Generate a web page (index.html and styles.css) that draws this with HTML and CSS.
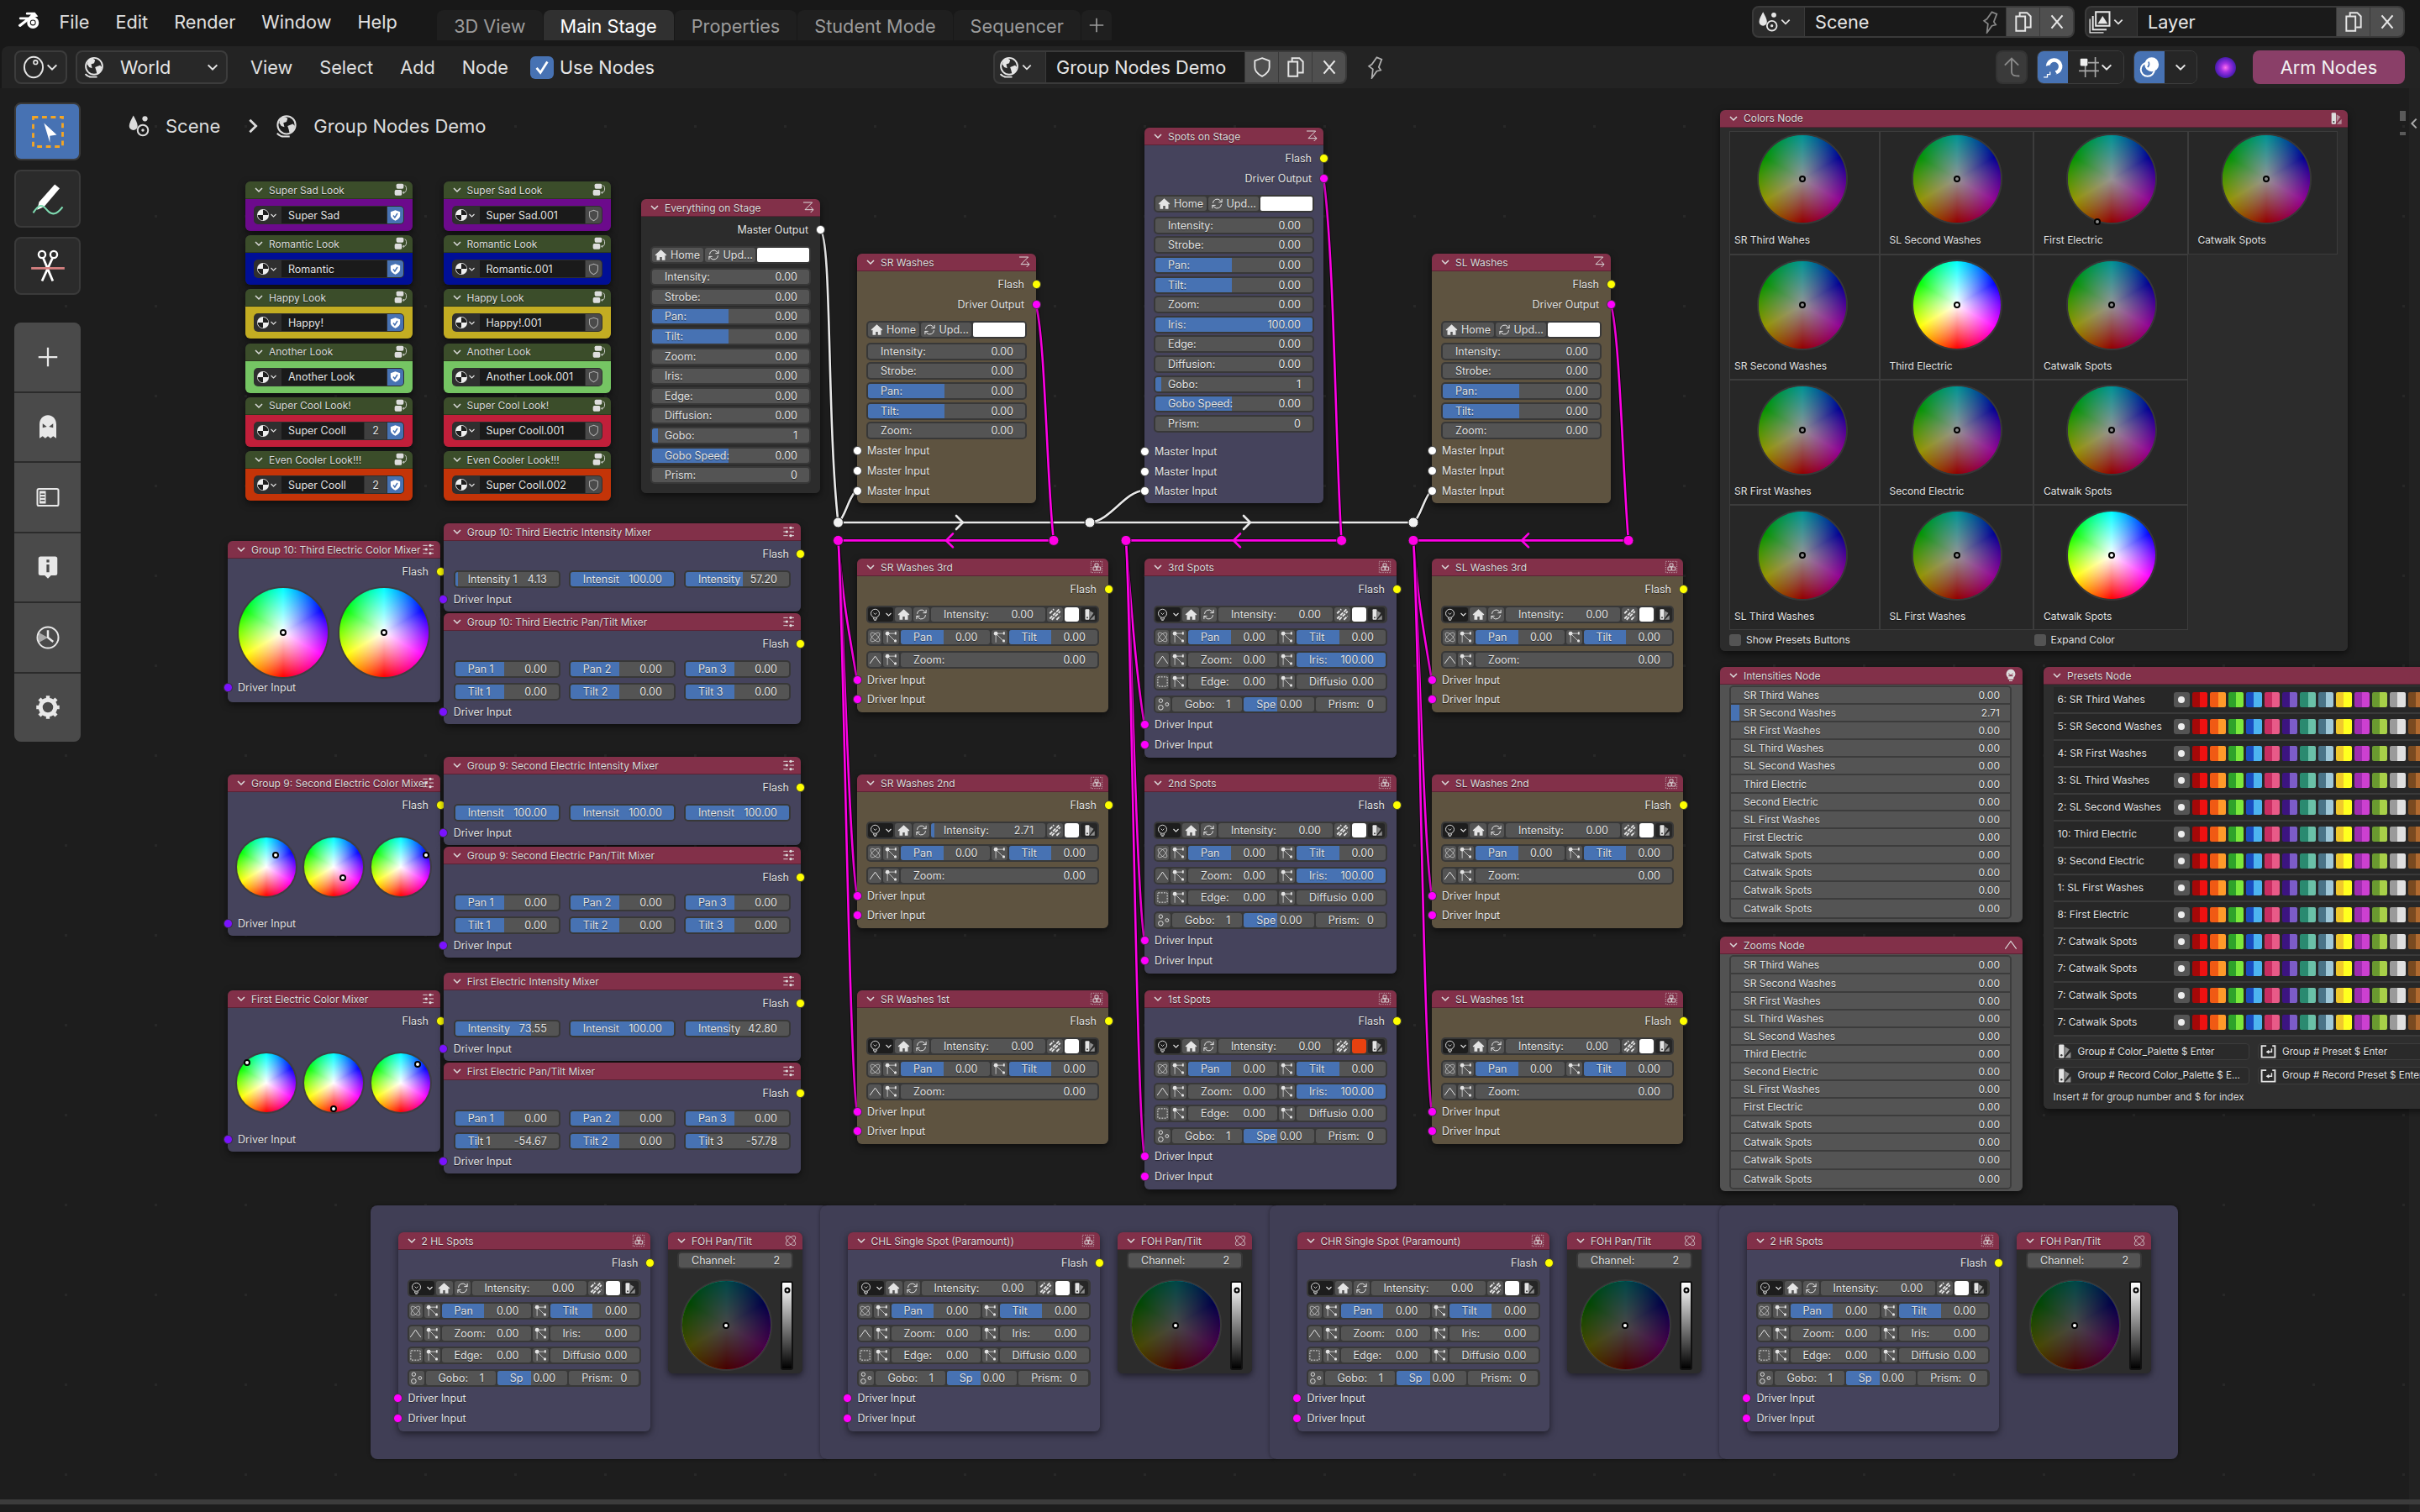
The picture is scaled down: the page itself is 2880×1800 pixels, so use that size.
FILE: index.html
```html
<!DOCTYPE html>
<html lang="en">
<head>
<meta charset="utf-8">
<title>Blender - Main Stage</title>
<link rel="stylesheet" href="styles.css">
</head>
<body>
<svg class="sprite" aria-hidden="true">
  <symbol id="i-logo" viewBox="0 0 32 32"><path fill="#fff" d="M13 17a7.5 7.5 0 1 1 15 0a7.5 7.5 0 1 1-15 0zm3.8 0a3.7 3.7 0 1 0 7.4 0a3.7 3.7 0 1 0-7.4 0z"/><path fill="#fff" d="M2 20l9-7H4.5a1.5 1.5 0 0 1 0-3H15l3-3h-5a1.5 1.5 0 0 1 0-3h10l4 5-9 3-13 10a2 2 0 0 1-3-2z"/><circle cx="20.5" cy="17" r="2.6" fill="#fff"/></symbol>
  <symbol id="i-globe" viewBox="0 0 24 24"><circle cx="12" cy="11" r="8.5" fill="none" stroke="currentColor" stroke-width="1.6"/><path fill="currentColor" d="M6 5c3-2 6-2 7 0l-1 3-3 1 1 4-3-1-2-3zM13 12l5-2 2 2-2 5-3 2-1-4z"/><path d="M3 19c2 2 4 3 6 3M7 22h8" fill="none" stroke="currentColor" stroke-width="1.6"/></symbol>
  <symbol id="i-sphere" viewBox="0 0 24 24"><ellipse cx="12" cy="12" rx="9.5" ry="10.5" fill="none" stroke="currentColor" stroke-width="1.6"/><circle cx="14" cy="7" r="2" fill="none" stroke="currentColor" stroke-width="1.4"/></symbol>
  <symbol id="i-ball" viewBox="0 0 24 24"><circle cx="12" cy="12" r="10.5" fill="#eee"/><path fill="#1e1e1e" d="M12 2.5a9.5 9.5 0 0 1 9.5 9.5H12zM12 12v9.5A9.5 9.5 0 0 1 2.5 12z"/></symbol>
  <symbol id="i-chev" viewBox="0 0 12 12"><path d="M2 4l4 4 4-4" fill="none" stroke="currentColor" stroke-width="1.5"/></symbol>
  <symbol id="i-copy" viewBox="0 0 24 24"><path d="M8 5V2h8l4 4v12h-5M4 6h10v16H4z" fill="none" stroke="currentColor" stroke-width="1.8"/></symbol>
  <symbol id="i-x" viewBox="0 0 24 24"><path d="M6 5l12 14M18 5L6 19" fill="none" stroke="currentColor" stroke-width="2"/></symbol>
  <symbol id="i-shield" viewBox="0 0 24 24"><path d="M12 2l8 3v7c0 5-4 8-8 10-4-2-8-5-8-10V5z" fill="none" stroke="currentColor" stroke-width="1.7"/></symbol>
  <symbol id="i-shieldc" viewBox="0 0 24 24"><path d="M12 2l9 3v7c0 5-5 8-9 10-4-2-9-5-9-10V5z" fill="#fff"/><path d="M8 12l3 4 5-8" fill="none" stroke="#4772b3" stroke-width="2.4"/></symbol>
  <symbol id="i-pin" viewBox="0 0 24 24"><path d="M15 2l5 2-3 8 2 3-4 1-5 7 1-9-4-3 3-2z" fill="none" stroke="currentColor" stroke-width="1.5"/></symbol>
  <symbol id="i-scene" viewBox="0 0 24 24"><path fill="currentColor" d="M7 2c2 4 4 7 4 10a4 4 0 0 1-8 0c0-3 2-6 4-10z"/><circle cx="18" cy="5" r="2.5" fill="currentColor"/><circle cx="16" cy="16" r="5" fill="none" stroke="currentColor" stroke-width="1.6"/><circle cx="16" cy="16" r="1.4" fill="currentColor"/></symbol>
  <symbol id="i-layer" viewBox="0 0 24 24"><path d="M7 2h14v14H7zM4 6v14h14" fill="none" stroke="currentColor" stroke-width="1.7"/><path d="M1 9v14h14" fill="none" stroke="currentColor" stroke-width="1.2"/><path fill="currentColor" d="M9 14l5-8 5 8z"/></symbol>
  <symbol id="i-up" viewBox="0 0 24 24"><path d="M5 10l7-7 7 7M12 4v13c0 3 2 4 8 4" fill="none" stroke="currentColor" stroke-width="1.6"/></symbol>
  <symbol id="i-magnet" viewBox="0 0 24 24"><path d="M6.5 11A7 7 0 1 1 15 18" fill="none" stroke="#fff" stroke-width="4.2"/><path d="M2 23h4v-3h3v-3" fill="none" stroke="#fff" stroke-width="1.2"/><path d="M3 12l6-2M13 15l3 5" stroke="#4772b3" stroke-width="1.2"/></symbol>
  <symbol id="i-snap" viewBox="0 0 24 24"><path d="M8 10v13M19 1v22M11 7h12M1 16h22" stroke="#a8a8a8" stroke-width="1.5" fill="none"/><rect x="2.5" y="2.5" width="8" height="8" rx="1" fill="#eee"/></symbol>
  <symbol id="i-overlay" viewBox="0 0 24 24"><circle cx="10" cy="14.5" r="7.5" fill="none" stroke="#fff" stroke-width="1.8"/><circle cx="14.5" cy="9" r="7.8" fill="#fff"/><path d="M11 6c1 2 1 4-1 6" stroke="#4772b3" stroke-width="1.5" fill="none"/></symbol>
  <symbol id="i-tree" viewBox="0 0 24 24"><path d="M3 3h16L6 16h15M16 11l5 5-5 5" fill="none" stroke="currentColor" stroke-width="1.5"/></symbol>
  <symbol id="i-sliders" viewBox="0 0 24 24"><path d="M2 5h20M2 12h20M2 19h20" stroke="currentColor" stroke-width="1.4" stroke-dasharray="8 3"/><circle cx="15" cy="5" r="2.4" fill="currentColor"/><circle cx="8" cy="12" r="2.4" fill="currentColor"/><circle cx="15" cy="19" r="2.4" fill="currentColor"/></symbol>
  <symbol id="i-lampbox" viewBox="0 0 24 24"><rect x="2" y="2" width="20" height="20" fill="none" stroke="currentColor" stroke-width="1" stroke-dasharray="2 2"/><path d="M9 6h6v5H9zM6 12h6v6H6zM13 12h6v6h-6z" fill="none" stroke="currentColor" stroke-width="1.4"/></symbol>
  <symbol id="i-bulb" viewBox="0 0 24 24"><circle cx="12" cy="10" r="8" fill="none" stroke="currentColor" stroke-width="1.5"/><path d="M9 18v3h6v-3M10 23h4M9 9l3 3 3-3" fill="none" stroke="currentColor" stroke-width="1.4"/></symbol>
  <symbol id="i-bulbf" viewBox="0 0 24 24"><path fill="currentColor" d="M12 1a8.5 8.5 0 0 1 5 15v3H7v-3A8.5 8.5 0 0 1 12 1z"/><path d="M8 9l4 3 4-3M8 13h8" stroke="#823049" stroke-width="1.5" fill="none"/><path d="M9 21.5h6" stroke="currentColor" stroke-width="1.8"/></symbol>
  <symbol id="i-home" viewBox="0 0 24 24"><path fill="currentColor" d="M12 2L1 12l1.5 1.5L4 12.5V22h6v-6h4v6h6v-9.5l1.5 1L23 12z"/></symbol>
  <symbol id="i-refresh" viewBox="0 0 24 24"><path d="M4 11a8 8 0 0 1 14-5l3 3M20 13a8 8 0 0 1-14 5l-3-3M21 3v6h-6M3 21v-6h6" fill="none" stroke="currentColor" stroke-width="1.6"/></symbol>
  <symbol id="i-stripes" viewBox="0 0 24 24"><path d="M2 10l8-8M2 20L20 2M6 22L22 6M15 22l7-7" stroke="currentColor" stroke-width="3" stroke-dasharray="7 2"/></symbol>
  <symbol id="i-palette" viewBox="0 0 24 24"><rect x="4" y="2" width="8" height="20" rx="1.5" fill="currentColor"/><path fill="currentColor" opacity=".55" d="M13 5l7 4-7 10zM13 22l9-9v9z"/><circle cx="8" cy="18" r="1.5" fill="#333"/></symbol>
  <symbol id="i-orbit" viewBox="0 0 24 24"><ellipse cx="12" cy="12" rx="11" ry="5" transform="rotate(45 12 12)" fill="none" stroke="currentColor" stroke-width="1"/><ellipse cx="12" cy="12" rx="11" ry="5" transform="rotate(-45 12 12)" fill="none" stroke="currentColor" stroke-width="1"/></symbol>
  <symbol id="i-graph" viewBox="0 0 24 24"><path d="M5 5h16M5 5l16 16M5 5v17" stroke="currentColor" stroke-width="1.2"/><circle cx="5" cy="5" r="3.8" fill="currentColor"/><circle cx="20" cy="19" r="2.5" fill="currentColor"/><path fill="currentColor" d="M19 2h3v5h-3z"/></symbol>
  <symbol id="i-cone" viewBox="0 0 24 24"><path d="M2 19L12 5l10 14" fill="none" stroke="currentColor" stroke-width="1.6"/></symbol>
  <symbol id="i-dash" viewBox="0 0 24 24"><rect x="3" y="3" width="18" height="18" rx="1" fill="none" stroke="currentColor" stroke-width="1.6" stroke-dasharray="3 2.2"/></symbol>
  <symbol id="i-gobo" viewBox="0 0 24 24"><circle cx="7" cy="5" r="3.5" fill="none" stroke="currentColor" stroke-width="1.5"/><circle cx="7" cy="18" r="4.5" fill="none" stroke="currentColor" stroke-width="1.5"/><circle cx="19" cy="12" r="3" fill="none" stroke="currentColor" stroke-width="1.5"/></symbol>
  <symbol id="i-import" viewBox="0 0 24 24"><rect x="4" y="1" width="13" height="9" rx="2.5" fill="currentColor"/><rect x="1" y="12" width="13" height="10" rx="2.5" fill="currentColor"/><path d="M19 4c4 1 4 12-1 13h-2M18 15l-2 2 2 2" fill="none" stroke="currentColor" stroke-width="1.3"/></symbol>
  <symbol id="i-preset" viewBox="0 0 24 24"><path d="M9 4H2v17h20V4h-4" fill="none" stroke="currentColor" stroke-width="2.4"/><path d="M17 8v5h-6M13 11l-3 2 3 2" fill="none" stroke="currentColor" stroke-width="1.8"/></symbol>
  <symbol id="i-select" viewBox="0 0 36 36"><rect x="3" y="3" width="30" height="30" fill="none" stroke="#f5a623" stroke-width="2.4" stroke-dasharray="5 4"/><path fill="#fff" d="M14 9l13 12-7 1v7z"/></symbol>
  <symbol id="i-annot" viewBox="0 0 36 36"><path fill="#fff" d="M25 3l5 4-16 19-7 3 2-8z"/><path d="M3 32c6-9 9-9 14-3s10 5 16-3" fill="none" stroke="#7fdcb2" stroke-width="1.8"/></symbol>
  <symbol id="i-cut" viewBox="0 0 36 36"><circle cx="12" cy="6" r="3.5" fill="none" stroke="#fff" stroke-width="2"/><circle cx="24" cy="6" r="3.5" fill="none" stroke="#fff" stroke-width="2"/><path d="M13 9l10 24M23 9L12 33" stroke="#fff" stroke-width="2.4"/><path d="M1 20h34" stroke="#d58080" stroke-width="2.4"/></symbol>
  <symbol id="i-plus" viewBox="0 0 24 24"><path d="M12 3v18M3 12h18" stroke="currentColor" stroke-width="1.8"/></symbol>
  <symbol id="i-ghost" viewBox="0 0 24 24"><path fill="currentColor" d="M12 1c5 0 8 4 8 9v13l-3-2-2.5 2L12 21l-2.5 2L7 21l-3 2V10c0-5 3-9 8-9z"/><path fill="#4a4a4a" d="M7 9l4 3-4 1zM17 9l-4 3 4 1z"/></symbol>
  <symbol id="i-panel" viewBox="0 0 24 24"><rect x="2" y="4" width="20" height="16" rx="1.5" fill="none" stroke="currentColor" stroke-width="1.6"/><path fill="currentColor" d="M4 6h6v12H4z"/><path d="M5 9h4M5 12h4M5 15h4" stroke="#4a4a4a" stroke-width="1.3"/></symbol>
  <symbol id="i-info" viewBox="0 0 24 24"><path fill="currentColor" d="M5 2h14a2 2 0 0 1 2 2v14a2 2 0 0 1-2 2h-4l-3 3-3-3H5a2 2 0 0 1-2-2V4a2 2 0 0 1 2-2z"/><path d="M12 5v2.5M12 9.5V17" stroke="#4a4a4a" stroke-width="2.6"/></symbol>
  <symbol id="i-clock" viewBox="0 0 24 24"><circle cx="12" cy="12" r="10" fill="none" stroke="currentColor" stroke-width="1.6"/><path d="M12 5v7l5 4" fill="none" stroke="currentColor" stroke-width="2"/><path d="M3 7l9 5-9 5z" fill="currentColor" opacity=".6"/></symbol>
  <symbol id="i-gear" viewBox="0 0 24 24"><circle cx="12" cy="12" r="7" fill="none" stroke="currentColor" stroke-width="4"/><path d="M12 1v5M12 18v5M1 12h5M18 12h5M4 4l4 4M16 16l4 4M20 4l-4 4M8 16l-4 4" stroke="currentColor" stroke-width="3.5"/></symbol>
  <symbol id="i-check" viewBox="0 0 24 24"><path d="M5 13l5 6 9-14" fill="none" stroke="#fff" stroke-width="3"/></symbol>
</svg>

<div class="topbar">
  <svg class="logo"><use href="#i-logo"/></svg>
  <nav class="menu"><span>File</span><span>Edit</span><span>Render</span><span>Window</span><span>Help</span></nav>
  <div class="tabs">
    <span class="tab">3D View</span><span class="tab on">Main Stage</span><span class="tab">Properties</span><span class="tab">Student Mode</span><span class="tab">Sequencer</span><span class="tab add"><svg class="ic"><use href="#i-plus"/></svg></span>
  </div>
  <div class="scene-box">
    <span class="db-ico"><svg class="ic m"><use href="#i-scene"/></svg><svg class="ic c"><use href="#i-chev"/></svg></span>
    <span class="db-name">Scene<svg class="ic m dimtext"><use href="#i-pin"/></svg></span>
    <span class="db-btn"><svg class="ic m"><use href="#i-copy"/></svg></span>
    <span class="db-btn"><svg class="ic m"><use href="#i-x"/></svg></span>
  </div>
  <div class="scene-box">
    <span class="db-ico"><svg class="ic m"><use href="#i-layer"/></svg><svg class="ic c"><use href="#i-chev"/></svg></span>
    <span class="db-name">Layer</span>
    <span class="db-btn"><svg class="ic m"><use href="#i-copy"/></svg></span>
    <span class="db-btn"><svg class="ic m"><use href="#i-x"/></svg></span>
  </div>
</div>

<div class="edhead">
  <div class="ed-left">
    <span class="dd type"><svg class="ic m"><use href="#i-sphere"/></svg><svg class="ic c"><use href="#i-chev"/></svg></span>
    <span class="dd world"><svg class="ic m"><use href="#i-globe"/></svg><em>World</em><svg class="ic c"><use href="#i-chev"/></svg></span>
    <nav class="edmenu"><span>View</span><span>Select</span><span>Add</span><span>Node</span></nav>
    <span class="usenodes"><i class="cb"><svg class="ic"><use href="#i-check"/></svg></i>Use Nodes</span>
  </div>
  <div class="scene-box mid">
    <span class="db-ico"><svg class="ic m"><use href="#i-globe"/></svg><svg class="ic c"><use href="#i-chev"/></svg></span>
    <span class="db-name">Group Nodes Demo</span>
    <span class="db-btn"><svg class="ic m"><use href="#i-shield"/></svg></span>
    <span class="db-btn"><svg class="ic m"><use href="#i-copy"/></svg></span>
    <span class="db-btn"><svg class="ic m"><use href="#i-x"/></svg></span>
  </div>
  <svg class="ic m pin"><use href="#i-pin"/></svg>
  <div class="ed-right">
    <span class="hb up"><svg class="ic m"><use href="#i-up"/></svg></span>
    <span class="hb-group"><span class="hb blue"><svg class="ic m"><use href="#i-magnet"/></svg></span><span class="hb wide"><svg class="ic m"><use href="#i-snap"/></svg><svg class="ic c"><use href="#i-chev"/></svg></span></span>
    <span class="hb-group"><span class="hb blue"><svg class="ic m"><use href="#i-overlay"/></svg></span><span class="hb"><svg class="ic c"><use href="#i-chev"/></svg></span></span>
    <i class="orb"></i>
    <span class="arm">Arm Nodes</span>
  </div>
</div>

<main class="canvas" id="canvas">
  <div class="crumbs">
    <svg class="ic cr"><use href="#i-scene"/></svg><span>Scene</span>
    <svg class="ic crc"><use href="#i-chev"/></svg>
    <svg class="ic cr"><use href="#i-globe"/></svg><span>Group Nodes Demo</span>
  </div>
  <aside class="tools">
    <span class="tool on"><svg class="ti"><use href="#i-select"/></svg></span>
    <span class="tool"><svg class="ti"><use href="#i-annot"/></svg></span>
    <span class="tool"><svg class="ti"><use href="#i-cut"/></svg></span>
    <div class="toolgrp">
      <span><svg class="tg"><use href="#i-plus"/></svg></span>
      <span><svg class="tg"><use href="#i-ghost"/></svg></span>
      <span><svg class="tg"><use href="#i-panel"/></svg></span>
      <span><svg class="tg"><use href="#i-info"/></svg></span>
      <span><svg class="tg"><use href="#i-clock"/></svg></span>
      <span><svg class="tg"><use href="#i-gear"/></svg></span>
    </div>
  </aside>
  <div class="strip"></div>
  <div class="sidetoggle"><i></i><i></i><svg class="ic"><use href="#i-chev"/></svg></div>
  <div class="hscroll"></div>
</main>
<script src="nodes.js"></script>
</body>
</html>
```

FILE: styles.css
```css
*{box-sizing:border-box}
html,body{margin:0;height:100%}
body{width:2880px;height:1800px;overflow:hidden;background:#181818;color:#e6e6e6;font-family:Inter,"Liberation Sans",sans-serif;font-size:21.7px;display:flex;flex-direction:column}
.sprite{position:absolute;width:0;height:0}
.ic{width:16px;height:16px;flex:none;display:block}
.ic.m{width:28px;height:28px}
.ic.c{width:16px;height:16px}

.topbar{height:55px;flex:none;display:flex;align-items:flex-start;position:relative}
.logo{width:34px;height:30px;margin:11px 0 0 18px;flex:none}
.menu{display:flex;margin-left:3px;height:52px;align-items:center}
.menu span{padding:0 15.5px;color:#e0e0e0}
.tabs{display:flex;gap:1px;margin-left:32px;margin-top:12px;height:36px;color:#9c9c9c}
.tab{padding:0 20px;height:36px;line-height:38px;background:#1f1f1f;border-radius:8px 8px 0 0;white-space:nowrap}
.tab.on{background:#303030;color:#fff}
.tab.add{padding:0 6px;display:flex;align-items:center;width:36px;justify-content:center}
.tab.add .ic{width:22px;height:22px}
.scene-box{display:flex;height:38px;background:#2b2b2b;border-radius:8px;border:2px solid #3a3a3a;align-items:stretch;flex:none;width:384px;margin-top:7px;margin-left:12px}
.topbar .tabs + .scene-box{margin-left:auto}
.topbar .scene-box:last-child{width:381px;margin-right:18px}
.db-ico{width:61px;display:flex;align-items:center;padding-left:3px;flex:none;border-right:1px solid #3a3a3a}
.db-ico .c{width:14px;height:14px}
.db-name{flex:1;background:#1a1a1a;display:flex;align-items:center;justify-content:space-between;padding:0 6px 0 12px;color:#e6e6e6;white-space:nowrap}
.dimtext{color:#888}
.db-btn{width:40px;background:#4f4f4f;display:flex;align-items:center;justify-content:center;flex:none;border-left:1px solid #3a3a3a}
.db-btn:last-child{border-radius:0 6px 6px 0}
.db-btn .ic{width:26px;height:26px}

.edhead{height:50px;flex:none;background:#232323;border-radius:8px 8px 0 0;margin-left:2px;display:grid;grid-template-columns:1180px auto auto 1fr auto;align-items:center}
.ed-left{display:flex;align-items:center;padding-left:15px}
.dd{display:flex;align-items:center;height:40px;background:#282828;border:2px solid #3c3c3c;border-radius:8px}
.dd.type{width:63px;padding-left:7px}
.dd.world{width:181px;margin-left:10px;padding:0 8px 0 6px}
.dd.world em{font-style:normal;flex:1;padding-left:17px}
.edmenu{display:flex;margin-left:11px}
.edmenu span{padding:0 16px;color:#e0e0e0}
.usenodes{display:flex;align-items:center;gap:7px;margin-left:10px;color:#e6e6e6}
.cb{width:28px;height:27px;background:#4772b3;border-radius:6px;display:flex;align-items:center;justify-content:center}
.cb .ic{width:22px;height:22px}
.scene-box.mid{width:421px;height:40px;margin:0}
.pin{margin-left:18px;color:#b0b0b0}
.ed-right{grid-column:5;display:flex;align-items:center;gap:11px;padding-right:18px}
.hb{display:flex;align-items:center;justify-content:center;height:38px;min-width:38px;background:#262626;flex:none}
.hb.up{border-radius:8px;color:#8a8a8a;width:38px;height:40px;background:#3a3a3a;border:2px solid #333}
.hb.blue{background:#4772b3;width:36px;min-width:36px}
.hb.wide{width:66px}
.hb-group{display:flex;border-radius:8px;overflow:hidden;border:1px solid #3c3c3c}
.hb-group .hb .m{width:26px;height:26px}
.orb{width:25px;height:25px;border-radius:50%;background:radial-gradient(circle at 50% 50%,#ff70f0,#a030e0 30%,#5a20c0 60%,#1c1050);margin:0 9px 0 10px}
.arm{width:181px;height:40px;background:#8a3f68;border-radius:8px;display:flex;align-items:center;justify-content:center;color:#f2f2f2}

.canvas{flex:1;position:relative;overflow:hidden;background-color:#1d1d1d;background-image:radial-gradient(circle 2px,#282828 90%,transparent);background-size:107px 107px;background-position:25px -8px}
.crumbs{position:absolute;left:150px;top:30px;display:flex;align-items:center;height:30px;z-index:3;color:#dcdcdc;font-size:22px}
.cr{width:30px;height:30px;margin-right:17px}
.crc{width:22px;height:22px;transform:rotate(-90deg);margin:0 14px 0 28px}
.tools{position:absolute;left:17px;top:17px;width:79px;z-index:4;display:flex;flex-direction:column;gap:11px}
.tool{height:69px;border-radius:8px;background:#2b2b2b;border:2px solid #3a3a3a;display:flex;align-items:center;justify-content:center}
.tool.on{background:#4772b3}
.ti{width:42px;height:42px}
.toolgrp{margin-top:22px;border-radius:8px;overflow:hidden;display:flex;flex-direction:column;gap:2px;background:#2b2b2b}
.toolgrp span{height:81.5px;background:#4a4a4a;display:flex;align-items:center;justify-content:center;color:#e8e8e8}
.tg{width:30px;height:30px}
.strip{position:absolute;right:0;top:0;bottom:0;width:13px;background:#222}
.sidetoggle{position:absolute;left:2856px;top:27px;width:24px;height:30px;z-index:3}
.sidetoggle i{display:block;position:absolute;left:0;width:7px;background:#5a5a5a}
.sidetoggle i:first-child{top:0;height:12px}
.sidetoggle i:nth-child(2){top:25px;height:4px}
.sidetoggle .ic{position:absolute;left:9px;top:7px;transform:rotate(90deg);color:#aaa}
.hscroll{position:absolute;left:0;right:0;top:1680px;height:6px;background:#3c3c3c;z-index:3}

.wires{position:absolute;left:0;top:0;width:2880px;height:1695px;z-index:1}
.w{fill:none;stroke-linecap:round}
.w.u{stroke:#000;stroke-width:4.5;opacity:.55}
.w.a{stroke:#e8e8e8;stroke-width:2.6}
.w.b{stroke:#ff00e6;stroke-width:2.6}
.rr{stroke:#222;stroke-width:1}
.rr.a{fill:#f2f2f2}
.rr.b{fill:#ff00e6}

.frame{position:absolute;z-index:0;background:#403e55;border-radius:8px;box-shadow:0 0 4px rgba(0,0,0,.4)}
.node{position:absolute;z-index:2;border-radius:6px;box-shadow:0 3px 8px rgba(0,0,0,.55);font-size:12.5px;color:#e4e4e4;text-shadow:0 1px 1px rgba(0,0,0,.55);background:#2c2c2c;white-space:nowrap}
.nh{height:21px;display:flex;align-items:center;background:#823049;border-radius:6px 6px 0 0;padding:0 6px 0 10px;border-bottom:1px solid #5b2234;color:#ddd;font-size:12px}
.nh .c{width:12px;height:12px;margin-right:6px;color:#ddd}
.nh span{flex:1;min-width:0}
.nh .k{width:16px;height:16px}
.nb{border-radius:0 0 6px 6px;padding-top:4.2px;display:flex;flex-direction:column}
.tan .nb{background:#5e5340;height:calc(100% - 21px)}
.vio .nb{background:#45435c;height:calc(100% - 21px)}
.dark .nb{background:#2c2c2c;height:calc(100% - 21px)}
.look .nh{background:#3b4d2a;border-bottom-color:#2c3a1e}
.look .nb{height:38px;padding:0;justify-content:center}
.look.purple .nb{background:#6c0a8c}
.look.navy .nb{background:#000f96}
.look.gold .nb{background:#c3ad22}
.look.lime .nb{background:#75c563}
.look.red .nb{background:#c11f3a}
.look.rust .nb{background:#c43408}

.row{height:23.6px;position:relative;display:flex;align-items:center;flex:none}
.row.out{justify-content:flex-end;padding-right:14px}
.row.in{padding-left:12px}
.dot{position:absolute;width:11px;height:11px;border-radius:50%;border:1px solid rgba(50,50,50,.85);top:6.3px;z-index:3}
.out .dot{right:-5.5px}
.in .dot{left:-5.5px}
.dot.yellow{background:#ffff00}
.dot.magenta{background:#ff00ff}
.dot.white{background:#fff}
.dot.purple{background:#7a12ff}

.wr{display:flex;height:21px;margin:2.6px 11px 0;padding:2px;gap:2px;background:#383838;border-radius:5px;flex:none}
.wr.first{margin-top:7.5px}
.wr.after{margin-top:5px}
.wr.sp{margin-top:5.7px}
.row.gap{margin-top:1.8px}
.row.gap9{margin-top:10.8px}
.sl{position:relative;flex:1 1 0;min-width:0;background:#545454;border-radius:3px;display:flex;justify-content:space-between;align-items:center;padding:0 14px 0 15px;overflow:hidden;line-height:17px}
.sl span{position:relative;z-index:1}
.sl .fill{position:absolute;left:0;top:0;bottom:0;background:#4772b3}
.btn{background:#545454;border-radius:3px;display:flex;align-items:center;justify-content:center;gap:4px;flex:none;overflow:hidden}
.btn .ic{width:15px;height:15px}
.btn.t{flex:1 1 0;justify-content:flex-start;padding:0 1px 0 3px}
.btn.ddk{background:#1d1d1d;width:30px}
.btn.ddk .c{width:9px;height:9px}
.btn.swatch{background:#fff;width:17px}
.btn.w16{width:16px}
.btn.w18{width:18px}
.btn.w19{width:19px}
.btn.w20{width:20px}
.btn.dkp{background:#262626;width:20px}
.btn.swatch.org{background:#e8410f}
.w136{flex:0 0 136px}
.swf{flex:0 0 62px;background:#fff;border-radius:2px}
.cols{display:flex;gap:10px;margin:7.4px 12px 0}
.cols.nx{margin-top:6px}
.cols .wr{flex:1 1 0;margin:0;min-width:0}

.lookrow{display:flex;margin:0 10px;height:22px;background:#2f2f2f;border-radius:5px;padding:1px;gap:1px;align-items:stretch}
.lk-i{width:31px;background:#2f2f2f;display:flex;align-items:center;justify-content:flex-start;padding-left:2px;border-radius:4px 0 0 4px}
.lk-i .g{width:16px;height:16px}
.lk-i .c{width:9px;height:9px}
.lk-n{flex:1;background:#1a1a1a;display:flex;align-items:center;padding-left:8px}
.lk-u{width:26px;background:#3f3f3f;display:flex;align-items:center;justify-content:center}
.lk-s{width:19px;background:#4a4a4a;display:flex;align-items:center;justify-content:center;border-radius:0 4px 4px 0}
.lk-s.on{background:#4772b3}
.lk-s .ic{width:15px;height:15px;color:#aaa}

.wheel{position:relative;border-radius:50%;flex:none;background:radial-gradient(closest-side,#fff,rgba(255,255,255,0)),conic-gradient(from 180deg,#f00,#ff0,#0f0,#0ff,#00f,#f0f,#f00);box-shadow:0 0 0 2px rgba(60,60,60,.8)}
.wheel.lg{width:104px;height:104px}
.wheel.xl{width:106px;height:106px}
.wheel.md{width:70px;height:70px}
.wheel.dim::after{content:"";position:absolute;inset:0;border-radius:50%;background:#000;opacity:.42}
.wheel.vdim::after{content:"";position:absolute;inset:0;border-radius:50%;background:#000;opacity:.72}
.cur{position:absolute;width:8px;height:8px;border:2px solid #000;background:#fff;border-radius:50%;transform:translate(-50%,-50%);z-index:2}
.dim .cur{background:#8a8a8a}
.wheels{display:flex;flex:none}
.wheels.two{gap:14px;padding-left:13px;margin-top:7px;margin-bottom:1px}
.wheels.three{gap:10px;padding-left:11px;margin-top:26px;margin-bottom:20.7px}
.foh-ch{margin-top:2px}
.foh-w{display:flex;justify-content:space-between;padding:0 11px 0 16.5px;margin-top:14px}
.wheel.fo{width:105px;height:105px}
.bar{width:15px;height:106px;background:linear-gradient(#fff,#000);border:2px solid #111;border-radius:3px;position:relative}
.bar .cur{left:50%;top:9px;background:#eee;width:7px;height:7px}

.dark .nb.flush{padding-top:0}
.colorsgrid{display:grid;grid-template-columns:178.5px 183.5px 183.5px 178.5px;grid-template-rows:147px 149px 149px 149.6px;margin:4px 12px 0 11px;font-size:12px}
.cell{background:#272727;border:1.5px solid #3c3c3c;position:relative;display:flex;flex-direction:column;padding:4.5px 5px 0}
.cell.r2{padding-top:7.5px}
.cell .wheel{margin-left:auto;margin-right:auto}
.c0 .wheel{transform:translateX(-2px)}
.c1 .wheel,.c2 .wheel{transform:translateX(1px)}
.c3 .wheel{transform:translateX(4px)}
.cell span{margin-top:13px;display:block;padding-left:6px}
.cell.c0 span{padding-left:0}
.cbs{display:flex;padding-top:3px;margin:0 11px;height:20px;align-items:center;font-size:12px}
.cbi{display:flex;align-items:center;gap:6px;width:368px}
.cbi i{width:14px;height:14px;background:#545454;border-radius:3px}
.listnode .nb{padding:1px 13px 0 11px;background:#525252;height:calc(100% - 21px);border-radius:0 0 6px 6px;font-size:12px}
.listwrap{border:2px solid #3c3c3c;border-radius:5px;overflow:hidden}
.li{position:relative;height:21.1px;background:#545454;border-bottom:2px solid #3c3c3c;display:flex;justify-content:space-between;align-items:center;padding:0 12px 0 15px;overflow:hidden}
.li:last-child{border-bottom:0}
.li span{position:relative}
.li .fill{position:absolute;left:0;top:0;bottom:0;background:#4772b3}
.pr{height:32px;display:flex;align-items:center;background:#272727;border-bottom:2px solid #3a3a3a;margin-left:11.6px;padding-left:5px}
.pr>span{width:138.4px;flex:none;overflow:hidden}
.pal{display:flex;gap:3px;height:18px}
.pal .dotb{width:19px;background:#545454;border-radius:3px;display:flex;align-items:center;justify-content:center}
.pal .dotb i{width:8px;height:8px;border-radius:50%;background:#eee}
.pp{width:18.4px;display:flex;border-radius:2px;overflow:hidden}
.pp i{flex:1}
.presets .nb{padding-top:2.5px;background:#2e2e2e;height:calc(100% - 21px);font-size:12px}
.pbtns{display:flex;gap:10.4px;margin:8px 0 0 11.6px;font-size:11.6px}
.pbtn{flex:none;height:20.5px;display:flex;align-items:center;background:#2a2a2a;border:1.5px solid #3c3c3c;border-radius:4px;overflow:hidden;padding-left:2px;gap:7px}
.pbtn.a{width:233px}
.pbtn.b{width:300px}
.pbtn .ic{width:19px;height:19px}
.pnote{margin:8px 0 0 11.6px;color:#ddd;font-size:11.6px}
```

FILE: nodes.js
```js
const canvas = document.getElementById('canvas');
const Y0 = 105;
const ic = (n, c = '') => `<svg class="ic ${c}"><use href="#i-${n}"/></svg>`;
const sock = (side, label, color, cls = '') => `<div class="row ${side} ${cls}"><i class="dot ${color}"></i><span>${label}</span></div>`;
const sl = (label, val, pct = 0) => `<div class="sl">${pct ? `<b class="fill" style="width:${pct}%"></b>` : ''}<span>${label}</span><span>${val}</span></div>`;
const btn = (n, c = '') => `<span class="btn ${c}">${ic(n)}</span>`;
const cur = (dx, dy) => `<i class="cur" style="left:calc(50% + ${dx}px);top:calc(50% + ${dy}px)"></i>`;

function add(html) { canvas.insertAdjacentHTML('beforeend', html); }
function node(x, y, w, h, title, icon, body, cls, flush) {
  add(`<section class="node ${cls}" style="left:${x}px;top:${y - Y0}px;width:${w}px;height:${h}px"><header class="nh">${ic('chev', 'c')}<span>${title}</span>${icon ? ic(icon, 'k') : ''}</header><div class="nb ${flush ? 'flush' : ''}">${body}</div></section>`);
}

/* look nodes */
const looks = [
  ['Super Sad Look', 'Super Sad', 'Super Sad.001', 'purple', ''],
  ['Romantic Look', 'Romantic', 'Romantic.001', 'navy', ''],
  ['Happy Look', 'Happy!', 'Happy!.001', 'gold', ''],
  ['Another Look', 'Another Look', 'Another Look.001', 'lime', ''],
  ['Super Cool Look!', 'Super Cooll', 'Super Cooll.001', 'red', '2'],
  ['Even Cooler Look!!!', 'Super Cooll', 'Super Cooll.002', 'rust', '2'],
];
looks.forEach((l, i) => {
  const y = 216 + i * 64.2;
  const field = (name, on, u) => `<div class="lookrow"><span class="lk-i">${ic('ball', 'g')}${ic('chev', 'c')}</span><span class="lk-n">${name}</span>${u ? `<span class="lk-u">${u}</span>` : ''}<span class="lk-s ${on ? 'on' : ''}">${ic(on ? 'shieldc' : 'shield')}</span></div>`;
  node(292, y, 199, 59, l[0], 'import', field(l[1], true, l[4]), 'look ' + l[3]);
  node(527.5, y, 199, 59, l[0], 'import', field(l[2], false, ''), 'look ' + l[3]);
});

/* master nodes */
function masterRows(list) {
  return list.map(([n, v, p], i) => `<div class="wr ${i === 0 ? 'after' : ''}">${sl(n, v, p)}</div>`).join('');
}
const homeRow = `<div class="wr first"><span class="btn t">${ic('home')}Home</span><span class="btn t">${ic('refresh')}Upd...</span><span class="swf"></span></div>`;
const F = 48.5;
node(763, 237, 213, 350, 'Everything on Stage', 'tree',
  sock('out', 'Master Output', 'white') + homeRow + masterRows([
    ['Intensity:', '0.00'], ['Strobe:', '0.00'], ['Pan:', '0.00', F], ['Tilt:', '0.00', F], ['Zoom:', '0.00'], ['Iris:', '0.00'], ['Edge:', '0.00'], ['Diffusion:', '0.00'], ['Gobo:', '1', 3.5], ['Gobo Speed:', '0.00', F], ['Prism:', '0'],
  ]), 'dark');
const masterIn = (g) => sock('in', 'Master Input', 'white', g) + sock('in', 'Master Input', 'white') + sock('in', 'Master Input', 'white');
const washMaster = (x, t) => node(x, 302, 213, 297, t, 'tree',
  sock('out', 'Flash', 'yellow') + sock('out', 'Driver Output', 'magenta') + homeRow + masterRows([
    ['Intensity:', '0.00'], ['Strobe:', '0.00'], ['Pan:', '0.00', F], ['Tilt:', '0.00', F], ['Zoom:', '0.00'],
  ]) + masterIn('gap'), 'tan');
washMaster(1020, 'SR Washes');
washMaster(1704, 'SL Washes');
node(1362, 152, 213, 447, 'Spots on Stage', 'tree',
  sock('out', 'Flash', 'yellow') + sock('out', 'Driver Output', 'magenta') + homeRow + masterRows([
    ['Intensity:', '0.00'], ['Strobe:', '0.00'], ['Pan:', '0.00', F], ['Tilt:', '0.00', F], ['Zoom:', '0.00'], ['Iris:', '100.00', 100], ['Edge:', '0.00'], ['Diffusion:', '0.00'], ['Gobo:', '1', 3.5], ['Gobo Speed:', '0.00', F], ['Prism:', '0'],
  ]) + masterIn('gap9'), 'vio');

/* fixture nodes */
function row1(int, pct, org) {
  return `<div class="wr first"><span class="btn ddk">${ic('bulb')}${ic('chev', 'c')}</span>${btn('home', 'w20')}${btn('refresh', 'w19')}<div class="sl w136">${pct ? `<b class="fill" style="width:${pct}%"></b>` : ''}<span>Intensity:</span><span>${int}</span></div>${btn('stripes', 'w19')}<span class="btn swatch ${org ? 'org' : ''}"></span>${btn('palette', 'dkp')}</div>`;
}
const panRow = `<div class="wr sp">${btn('orbit', 'w16')}${btn('graph', 'w19')}${sl('Pan', '0.00', 48)}${btn('graph', 'w19')}${sl('Tilt', '0.00', 48)}</div>`;
function washNode(x, y, title, int, pct) {
  node(x, y, 299, 183, title, 'lampbox',
    sock('out', 'Flash', 'yellow') + row1(int, pct) + panRow +
    `<div class="wr sp">${btn('cone', 'w16')}${btn('graph', 'w19')}${sl('Zoom:', '0.00')}</div>` +
    sock('in', 'Driver Input', 'magenta', 'gap') + sock('in', 'Driver Input', 'magenta'), 'tan');
}
function spotNode(x, y, title, o) {
  node(x, y, 300, 237, title, 'lampbox',
    sock('out', 'Flash', 'yellow') + row1('0.00', 0, o.org) + panRow +
    `<div class="wr sp">${btn('cone', 'w16')}${btn('graph', 'w19')}${sl('Zoom:', '0.00')}${btn('graph', 'w19')}${o.iris ? sl('Iris:', '100.00', 100) : sl('Iris:', '0.00')}</div>` +
    `<div class="wr sp">${btn('dash', 'w16')}${btn('graph', 'w19')}${sl('Edge:', '0.00')}${btn('graph', 'w19')}${sl('Diffusio', '0.00')}</div>` +
    `<div class="wr sp">${btn('gobo', 'w18')}${sl('Gobo:', '1')}${sl(o.sp, '0.00', 48)}${sl('Prism:', '0')}</div>` +
    sock('in', 'Driver Input', 'magenta', 'gap') + sock('in', 'Driver Input', 'magenta'), 'vio');
}
[['3rd', 665, '0.00'], ['2nd', 922, '2.71'], ['1st', 1179, '0.00']].forEach(([t, y, v]) => {
  const p = v === '0.00' ? 0 : 3;
  washNode(1020, y, `SR Washes ${t}`, v, p);
  spotNode(1362, y, `${t} Spots`, { iris: true, sp: 'Spe', org: t === '1st' });
  washNode(1704, y, `SL Washes ${t}`, '0.00', 0);
});

/* frames */
['2 HL Spots', 'CHL Single Spot (Paramount))', 'CHR Single Spot (Paramount)', '2 HR Spots'].forEach((t, i) => {
  const dx = 535 * i;
  add(`<div class="frame" style="left:${441 + dx}px;top:${1435 - Y0}px;width:546px;height:302px"></div>`);
  spotNode(473.5 + dx, 1467, t, { iris: false, sp: 'Sp' });
  node(795 + dx, 1467, 160, 168, 'FOH Pan/Tilt', 'orbit',
    `<div class="wr foh-ch">${sl('Channel:', '2')}</div><div class="foh-w"><div class="wheel fo vdim">${cur(0, 0)}</div><div class="bar"><i class="cur"></i></div></div>`, 'dark', true);
});

/* mixers */
const flashOut = sock('out', 'Flash', 'yellow');
const wrap = (label, val, pct) => `<div class="wr">${sl(label, val, pct)}</div>`;
function colorMixer(y, h, title, wheels, kind) {
  const html = wheels.map(([dx, dy]) => `<div class="wheel ${kind === 'two' ? 'xl' : 'md'}">${cur(dx, dy)}</div>`).join('');
  node(271, y, 253, h, title, 'sliders', flashOut + `<div class="wheels ${kind}">${html}</div>` + sock('in', 'Driver Input', 'purple'), 'vio');
}
function intensityMixer(y, title, vals) {
  node(527.7, y, 425.3, 105, title, 'sliders', flashOut + `<div class="cols">${vals.map(v => wrap(...v)).join('')}</div>` + sock('in', 'Driver Input', 'purple', 'gap'), 'vio');
}
function panMixer(y, title, tilts) {
  const p = [1, 2, 3].map(i => wrap(`Pan ${i}`, '0.00', 47.5)).join('');
  const t = tilts.map(([i, v, f]) => wrap(`Tilt ${i}`, v, f)).join('');
  node(527.7, y, 425.3, 132, title, 'sliders', flashOut + `<div class="cols">${p}</div><div class="cols nx">${t}</div>` + sock('in', 'Driver Input', 'purple', 'gap'), 'vio');
}
const T0 = [[1, '0.00', 47.5], [2, '0.00', 47.5], [3, '0.00', 47.5]];
colorMixer(644, 192, 'Group 10: Third Electric Color Mixer', [[0, 0], [0, 0]], 'two');
intensityMixer(623, 'Group 10: Third Electric Intensity Mixer', [['Intensity 1', '4.13', 3], ['Intensit', '100.00', 100], ['Intensity', '57.20', 55]]);
panMixer(730, 'Group 10: Third Electric Pan/Tilt Mixer', T0);
colorMixer(922, 192, 'Group 9: Second Electric Color Mixer', [[10.5, -14], [11, 13.6], [30, -14]], 'three');
intensityMixer(901, 'Group 9: Second Electric Intensity Mixer', [['Intensit', '100.00', 100], ['Intensit', '100.00', 100], ['Intensit', '100.00', 100]]);
panMixer(1008, 'Group 9: Second Electric Pan/Tilt Mixer', T0);
colorMixer(1179, 192, 'First Electric Color Mixer', [[-23, -24], [0, 31], [20, -22]], 'three');
intensityMixer(1158, 'First Electric Intensity Mixer', [['Intensity', '73.55', 73], ['Intensit', '100.00', 100], ['Intensity', '42.80', 42]]);
panMixer(1265, 'First Electric Pan/Tilt Mixer', [[1, '-54.67', 22], [2, '0.00', 47.5], [3, '-57.78', 21]]);

/* colors node */
const names = [
  [['SR Third Wahes', 1], ['SL Second Washes', 1], ['First Electric', 1, [-16.5, 51]], ['Catwalk Spots', 1]],
  [['SR Second Washes', 1], ['Third Electric', 0], ['Catwalk Spots', 1]],
  [['SR First Washes', 1], ['Second Electric', 1], ['Catwalk Spots', 1]],
  [['SL Third Washes', 1], ['SL First Washes', 1], ['Catwalk Spots', 0]],
];
const gridHtml = names.map((row, r) => row.map(([n, d, c], k) =>
  `<div class="cell c${k} ${r ? 'r2' : ''}"><div class="wheel lg ${d ? 'dim' : ''}">${cur(...(c || [0, 0]))}</div><span>${n}</span></div>`).join('') + (r ? '<div></div>' : '')).join('');
node(2047, 130.5, 747, 644, 'Colors Node', 'palette',
  `<div class="colorsgrid">${gridHtml}</div><div class="cbs"><span class="cbi"><i></i>Show Presets Buttons</span><span class="cbi"><i></i>Expand Color</span></div>`, 'dark', true);

/* list nodes */
const listNames = ['SR Third Wahes', 'SR Second Washes', 'SR First Washes', 'SL Third Washes', 'SL Second Washes', 'Third Electric', 'Second Electric', 'SL First Washes', 'First Electric', 'Catwalk Spots', 'Catwalk Spots', 'Catwalk Spots', 'Catwalk Spots'];
const list = (vals) => `<div class="listwrap">` + listNames.map((n, i) => `<div class="li">${vals[i] ? `<b class="fill" style="width:${vals[i][1]}%"></b>` : ''}<span>${n}</span><span>${vals[i] ? vals[i][0] : '0.00'}</span></div>`).join('') + `</div>`;
node(2047, 794, 360, 304, 'Intensities Node', 'bulbf', list({ 1: ['2.71', 3] }), 'listnode', true);
node(2047, 1115.4, 360, 303, 'Zooms Node', 'cone', list({}), 'listnode', true);

/* presets */
const palette = [['#a50808', '#ee1111'], ['#f05a14', '#ff9a2a'], ['#2ea32a', '#7be83c'], ['#1a4dc0', '#4db4f0'], ['#c82e62', '#e85a88'], ['#3c1480', '#7c5cc8'], ['#2a8a70', '#6ac0a8'], ['#4a7488', '#a0c8d8'], ['#f0c82c', '#ffff20'], ['#a02cb0', '#cc40d0'], ['#6a9a30', '#a8d048'], ['#9a9a9a', '#e0e0e0'], ['#7a4a20', '#b06a30']];
const palHtml = palette.map(([a, b]) => `<span class="pp"><i style="background:${a}"></i><i style="background:${b}"></i></span>`).join('');
const presets = ['6: SR Third Wahes', '5: SR Second Washes', '4: SR First Washes', '3: SL Third Washes', '2: SL Second Washes', '10: Third Electric', '9: Second Electric', '1: SL First Washes', '8: First Electric', '7: Catwalk Spots', '7: Catwalk Spots', '7: Catwalk Spots', '7: Catwalk Spots'];
node(2432, 794, 500, 526, 'Presets Node', '',
  presets.map(p => `<div class="pr"><span>${p}</span><div class="pal"><span class="dotb"><i></i></span>${palHtml}</div></div>`).join('') +
  `<div class="pbtns"><span class="pbtn a">${ic('palette')}Group # Color_Palette $ Enter</span><span class="pbtn b">${ic('preset')}Group # Preset $ Enter</span></div>` +
  `<div class="pbtns"><span class="pbtn a">${ic('palette')}Group # Record Color_Palette $ E...</span><span class="pbtn b">${ic('preset')}Group # Record Preset $ Enter</span></div>` +
  `<div class="pnote">Insert # for group number and $ for index</div>`, 'presets', true);

/* wires */
const wh = [
  'M976 274C990 280 984 500 997.5 622', 'M997.5 622C1006 616 1010 590 1020 583.7', 'M997.5 622H1682',
  'M1297 622C1322 620 1338 585 1362 583.7', 'M1682 622C1691 616 1695 590 1704 583.7',
];
const mg = [
  'M1232.5 362C1244 400 1246 580 1254 643.4', 'M1575 212C1588 300 1590 560 1596.6 643.4', 'M1917 362C1928 400 1932 580 1938 643.4',
  'M1254 643.4H997.5', 'M1596.6 643.4H1340', 'M1938 643.4H1682',
];
[[997.5, 1020, 810, 1067, 1324], [1340, 1362, 862.7, 1119.7, 1376.7], [1682, 1704, 810, 1067, 1324]].forEach(([x0, x1, a, b, c]) => {
  [a, b, c].forEach(y => mg.push(`M${x0} 643.4C${x0 + 6} 720 ${x1 - 10} ${y - 60} ${x1} ${y}`));
});
const pth = (arr, k) => arr.map(d => `<path class="w u" d="${d}"/><path class="w ${k}" d="${d}"/>`).join('');
const chevs = [[1142, 622, 1, 'a'], [1484, 622, 1, 'a'], [1130, 643.4, -1, 'b'], [1472, 643.4, -1, 'b'], [1815, 643.4, -1, 'b']]
  .map(([x, y, s, k]) => `<path class="w ${k}" d="M${x - 4 * s} ${y - 8}L${x + 4 * s} ${y}L${x - 4 * s} ${y + 8}"/>`).join('');
const rr = (list, k) => list.map(([x, y]) => `<circle class="rr ${k}" cx="${x}" cy="${y}" r="6"/>`).join('');
add(`<svg class="wires" viewBox="0 ${Y0} 2880 1695">${pth(wh, 'a')}${pth(mg, 'b')}${chevs}${rr([[997.5, 622], [1297, 622], [1682, 622]], 'a')}${rr([[997.5, 643.4], [1254, 643.4], [1340, 643.4], [1596.6, 643.4], [1682, 643.4], [1938, 643.4]], 'b')}</svg>`);
```
